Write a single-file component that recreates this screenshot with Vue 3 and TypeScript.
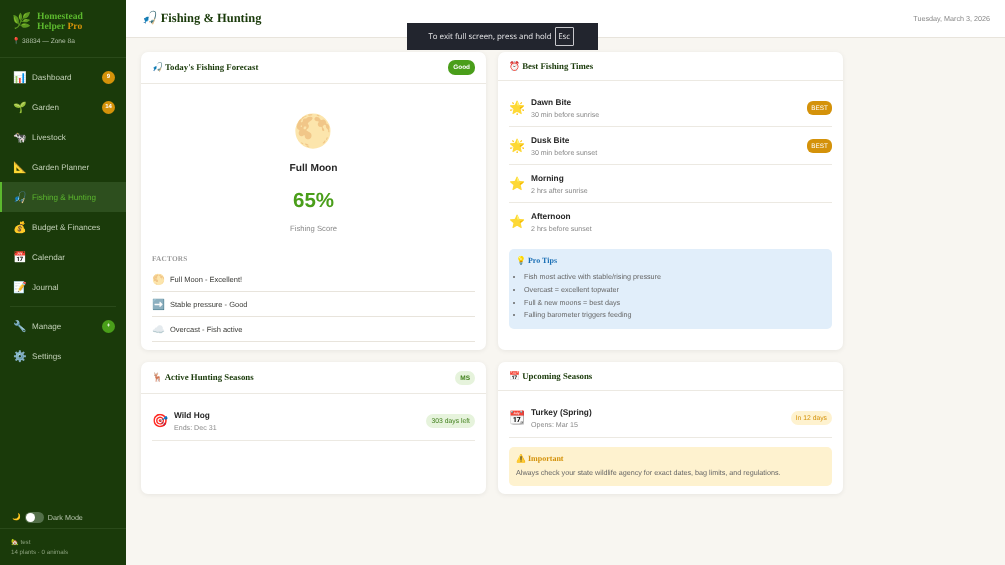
<script setup lang="ts">
interface NavItem { icon: string; label: string; badge?: string; badgeKind?: string; active?: boolean }
const mainNav: NavItem[] = [
  { icon: '📊', label: 'Dashboard', badge: '9', badgeKind: 'amber' },
  { icon: '🌱', label: 'Garden', badge: '14', badgeKind: 'amber' },
  { icon: '🐄', label: 'Livestock' },
  { icon: '📐', label: 'Garden Planner' },
  { icon: '🎣', label: 'Fishing & Hunting', active: true },
  { icon: '💰', label: 'Budget & Finances' },
  { icon: '📅', label: 'Calendar' },
  { icon: '📝', label: 'Journal' },
]
const lowerNav: NavItem[] = [
  { icon: '🔧', label: 'Manage', badge: '+', badgeKind: 'green' },
  { icon: '⚙️', label: 'Settings' },
]
const factors = [
  { icon: '🌕', text: 'Full Moon - Excellent!' },
  { icon: '➡️', text: 'Stable pressure - Good' },
  { icon: '☁️', text: 'Overcast - Fish active' },
]
const times = [
  { icon: '🌟', name: 'Dawn Bite', sub: '30 min before sunrise', best: true },
  { icon: '🌟', name: 'Dusk Bite', sub: '30 min before sunset', best: true },
  { icon: '⭐', name: 'Morning', sub: '2 hrs after sunrise', best: false },
  { icon: '⭐', name: 'Afternoon', sub: '2 hrs before sunset', best: false },
]
const tips = [
  'Fish most active with stable/rising pressure',
  'Overcast = excellent topwater',
  'Full & new moons = best days',
  'Falling barometer triggers feeding',
]
</script>

<template>
  <div class="app">
    <aside class="sidebar">
      <div class="brand">
        <div class="brand-row">
          <span class="brand-logo">🌿</span>
          <div class="brand-name">Homestead<br />Helper <span class="pro">Pro</span></div>
        </div>
        <div class="brand-loc">📍 38834 — Zone 8a</div>
      </div>
      <nav class="nav">
        <div v-for="item in mainNav" :key="item.label" class="nav-item" :class="{ active: item.active }">
          <span class="nav-icon">{{ item.icon }}</span>
          <span class="nav-label">{{ item.label }}</span>
          <span v-if="item.badge" class="nav-badge" :class="item.badgeKind">{{ item.badge }}</span>
        </div>
        <div class="nav-divider"></div>
        <div v-for="item in lowerNav" :key="item.label" class="nav-item">
          <span class="nav-icon">{{ item.icon }}</span>
          <span class="nav-label">{{ item.label }}</span>
          <span v-if="item.badge" class="nav-badge" :class="item.badgeKind">{{ item.badge }}</span>
        </div>
      </nav>
      <div class="dark-row">
        <span class="moon">🌙</span>
        <span class="toggle"><span class="knob"></span></span>
        <span>Dark Mode</span>
      </div>
      <div class="farm">
        <div>🏡 test</div>
        <div class="farm-stats">14 plants · 0 animals</div>
      </div>
    </aside>

    <div class="main">
      <header class="topbar">
        <h1 class="page-title">🎣 Fishing &amp; Hunting</h1>
        <span class="date">Tuesday, March 3, 2026</span>
      </header>
      <div class="fs-toast">
        <span>To exit full screen, press and hold</span>
        <kbd class="esc">Esc</kbd>
      </div>

      <main class="content">
        <section class="card">
          <div class="card-head tall">
            <h2>🎣 Today's Fishing Forecast</h2>
            <span class="pill solid-green">Good</span>
          </div>
          <div class="card-body">
            <div class="forecast">
              <div class="moon-big">🌕</div>
              <div class="moon-name">Full Moon</div>
              <div class="score">65%</div>
              <div class="score-label">Fishing Score</div>
            </div>
            <div class="factors-title">FACTORS</div>
            <div v-for="f in factors" :key="f.text" class="factor">
              <span class="factor-icon">{{ f.icon }}</span>
              <span>{{ f.text }}</span>
            </div>
          </div>
        </section>

        <section class="card">
          <div class="card-head">
            <h2>⏰ Best Fishing Times</h2>
          </div>
          <div class="card-body">
            <div class="time-list">
              <div v-for="t in times" :key="t.name" class="row">
                <span class="row-icon">{{ t.icon }}</span>
                <div class="row-text">
                  <div class="row-name">{{ t.name }}</div>
                  <div class="row-sub">{{ t.sub }}</div>
                </div>
                <span v-if="t.best" class="best">BEST</span>
              </div>
            </div>
            <div class="note tips">
              <div class="note-title">💡 Pro Tips</div>
              <ul>
                <li v-for="tip in tips" :key="tip">{{ tip }}</li>
              </ul>
            </div>
          </div>
        </section>

        <section class="card">
          <div class="card-head tall">
            <h2>🦌 Active Hunting Seasons</h2>
            <span class="pill soft-green ms">MS</span>
          </div>
          <div class="card-body season-body">
            <div class="row">
              <span class="row-icon">🎯</span>
              <div class="row-text">
                <div class="row-name">Wild Hog</div>
                <div class="row-sub">Ends: Dec 31</div>
              </div>
              <span class="pill soft-green days">303 days left</span>
            </div>
          </div>
        </section>

        <section class="card">
          <div class="card-head">
            <h2>📅 Upcoming Seasons</h2>
          </div>
          <div class="card-body season-body">
            <div class="row">
              <span class="row-icon">📆</span>
              <div class="row-text">
                <div class="row-name">Turkey (Spring)</div>
                <div class="row-sub">Opens: Mar 15</div>
              </div>
              <span class="pill soft-amber days">In 12 days</span>
            </div>
            <div class="note warn">
              <div class="note-title">⚠️ Important</div>
              <p>Always check your state wildlife agency for exact dates, bag limits, and regulations.</p>
            </div>
          </div>
        </section>
      </main>
    </div>
  </div>
</template>

<style>
html, body { margin: 0; padding: 0; }
</style>

<style scoped>
.app {
  display: flex;
  width: 1005px;
  height: 565px;
  overflow: hidden;
  background: #f8f6f1;
  font-family: "Liberation Sans", Arial, sans-serif;
  color: #2c2c2c;
  text-rendering: geometricPrecision;
  filter: blur(0.25px);
}
.sidebar {
  width: 126px;
  flex: none;
  display: flex;
  flex-direction: column;
  background: #1a3a0a;
  color: #c3d0b8;
  box-sizing: border-box;
}
.brand {
  height: 58px;
  box-sizing: border-box;
  padding: 10px 10px 0 12px;
  border-bottom: 1px solid #2a4a1a;
}
.brand-row { display: flex; align-items: center; gap: 7px; }
.brand-logo { font-size: 15.5px; line-height: 24px; width: 18px; }
.brand-name {
  font-family: "Liberation Serif", serif;
  font-weight: 700;
  font-size: 9.6px;
  line-height: 10.5px;
  color: #5cb82e;
}
.pro { color: #d4920a; }
.brand-loc { font-size: 6.6px; line-height: 10px; margin-top: 3px; color: #b4c2ab; }
.nav { flex: 1; padding-top: 4px; }
.nav-item {
  display: flex;
  align-items: center;
  height: 30px;
  padding: 1px 11px 0 12px;
  box-sizing: border-box;
  font-size: 8.1px;
  color: #c3d0b8;
}
.nav-item.active {
  background: #2d4f1e;
  color: #5cb82e;
  box-shadow: inset 2px 0 0 #5cb82e;
}
.nav-icon { width: 20px; font-size: 11px; text-align: left; margin-left: 1px; margin-right: -1px; }
.nav-label { flex: 1; }
.nav-badge {
  min-width: 12px;
  height: 13px;
  border-radius: 7px;
  font-size: 6px;
  font-weight: 700;
  line-height: 13px;
  text-align: center;
  color: #fff;
  padding: 0 0.5px;
}
.nav-badge.amber { background: #d4920a; }
.nav-badge.green { background: #4a9e1a; }
.nav-divider { height: 1px; background: #2a4a1a; margin: 4px 10px; }
.dark-row {
  display: flex;
  align-items: center;
  gap: 4px;
  height: 22px;
  padding-left: 12px;
  font-size: 7.2px;
  color: #b4c2ab;
  border-bottom: 1px solid #2a4a1a;
}
.moon { font-size: 7px; }
.toggle {
  width: 19px;
  height: 11px;
  border-radius: 6px;
  background: #54704a;
  display: block;
  position: relative;
}
.knob {
  position: absolute;
  left: 1px;
  top: 1px;
  width: 9px;
  height: 9px;
  border-radius: 50%;
  background: #fff;
}
.farm {
  height: 36px;
  padding: 9px 11px 0;
  box-sizing: border-box;
  font-size: 6.2px;
  line-height: 10px;
  color: #8aa07c;
}
.main { flex: 1; position: relative; min-width: 0; display: flex; flex-direction: column; }
.topbar {
  height: 38px;
  box-sizing: border-box;
  background: #fff;
  border-bottom: 1px solid #e8e4dc;
  display: flex;
  align-items: center;
  justify-content: space-between;
  padding: 0 15px 0 16px;
}
.page-title {
  margin: 0;
  font-family: "Liberation Serif", serif;
  font-size: 12.5px;
  font-weight: 700;
  color: #1a3a0a;
}
.date { font-size: 7.2px; color: #888; }
.fs-toast {
  position: absolute;
  left: 281px;
  top: 23px;
  width: 191px;
  height: 27px;
  box-sizing: border-box;
  background: #22252e;
  color: #e8e8ea;
  font-family: "Open Sans", "Liberation Sans", sans-serif;
  font-size: 7.9px;
  display: flex;
  align-items: center;
  justify-content: center;
  gap: 3px;
  padding-right: 3px;
}
.esc {
  font-family: inherit;
  border: 1px solid #c8c8cc;
  border-radius: 1px;
  width: 19px;
  height: 19px;
  box-sizing: border-box;
  line-height: 18px;
  text-align: center;
}
.content {
  display: grid;
  grid-template-columns: 345px 345px;
  grid-template-rows: 298px 132px;
  gap: 12px;
  padding: 14px 15px;
}
.card {
  background: #fff;
  border-radius: 7px;
  box-shadow: 0 1px 5px rgba(0, 0, 0, 0.07);
  overflow: hidden;
}
.card-head {
  height: 29px;
  box-sizing: border-box;
  display: flex;
  align-items: center;
  justify-content: space-between;
  padding: 0 11px;
  border-bottom: 1px solid #ece9e2;
}
.card-head.tall { height: 32px; }
.card-head h2 {
  margin: 0;
  font-family: "Liberation Serif", serif;
  font-size: 8.8px;
  font-weight: 700;
  color: #1a3a0a;
}
.card-body { padding: 11px 11px; }
.season-body { padding-top: 8px; }
.season-body .row { height: 39px; }
.pill {
  border-radius: 7px;
  font-size: 6.8px;
  line-height: 13px;
  padding: 1px 5px 0;
  display: inline-block;
}
.solid-green { background: #4a9e1a; color: #fff; font-weight: 700; font-size: 6.4px; padding: 1px 5px 0; line-height: 14px; }
.soft-green { background: #e6f3dc; color: #3f7f1a; }
.ms { font-weight: 700; font-size: 6.5px; }
.soft-amber { background: #fef2cf; color: #d4920a; }
.forecast { text-align: center; padding-top: 14px; }
.moon-big { font-size: 32px; line-height: 44px; }
.moon-name { font-size: 10.2px; font-weight: 700; margin-top: 9px; line-height: 14px; color: #262626; }
.score { font-size: 20.5px; font-weight: 700; color: #4a9e1a; margin-top: 12px; line-height: 26px; }
.score-label { font-size: 7.7px; color: #888; margin-top: 10px; line-height: 10px; }
.factors-title {
  font-family: "Liberation Serif", serif;
  font-size: 7.3px;
  font-weight: 700;
  color: #999;
  margin-top: 20px;
  margin-bottom: 4px;
  letter-spacing: 0.2px;
}
.factor {
  display: flex;
  align-items: center;
  height: 25px;
  box-sizing: border-box;
  font-size: 7.5px;
  color: #3a3a36;
  border-bottom: 1px solid #e8e4dc;
}
.factor-icon { width: 18px; font-size: 10.5px; }
.time-list { margin-top: -3px; }
.row {
  display: flex;
  align-items: center;
  height: 38px;
  box-sizing: border-box;
  border-bottom: 1px solid #ece9e2;
}
.time-list .row:last-child { border-bottom: none; }
.row-icon { width: 22px; font-size: 13px; flex: none; }
.row-text { flex: 1; }
.row-name { font-size: 8.3px; font-weight: 700; color: #262626; line-height: 12px; }
.row-sub { font-size: 7.1px; color: #888; line-height: 10px; margin-top: 2px; }
.best {
  background: #d4920a;
  color: #fff;
  border-radius: 6px;
  font-size: 6.4px;
  line-height: 13px;
  padding: 1px 4px 0;
  margin-top: 1px;
}
.note { border-radius: 5px; padding: 7px 7px; }
.note-title {
  font-family: "Liberation Serif", serif;
  font-size: 8px;
  font-weight: 700;
  line-height: 10px;
}
.tips { background: #e1eefa; margin-top: 8px; height: 80px; box-sizing: border-box; padding-top: 7px; }
.tips .note-title { color: #1a6fb5; }
.tips ul { margin: 5px 0 0; padding: 0 0 0 8px; list-style: disc; }
.tips li { font-size: 7.2px; line-height: 12.8px; color: #666; }
.warn { background: #fef2cf; margin-top: 9px; height: 39px; box-sizing: border-box; padding-top: 7px; }
.warn .note-title { color: #d4920a; }
.warn p { margin: 4px 0 0; font-size: 7.2px; line-height: 10px; color: #666; }
</style>
